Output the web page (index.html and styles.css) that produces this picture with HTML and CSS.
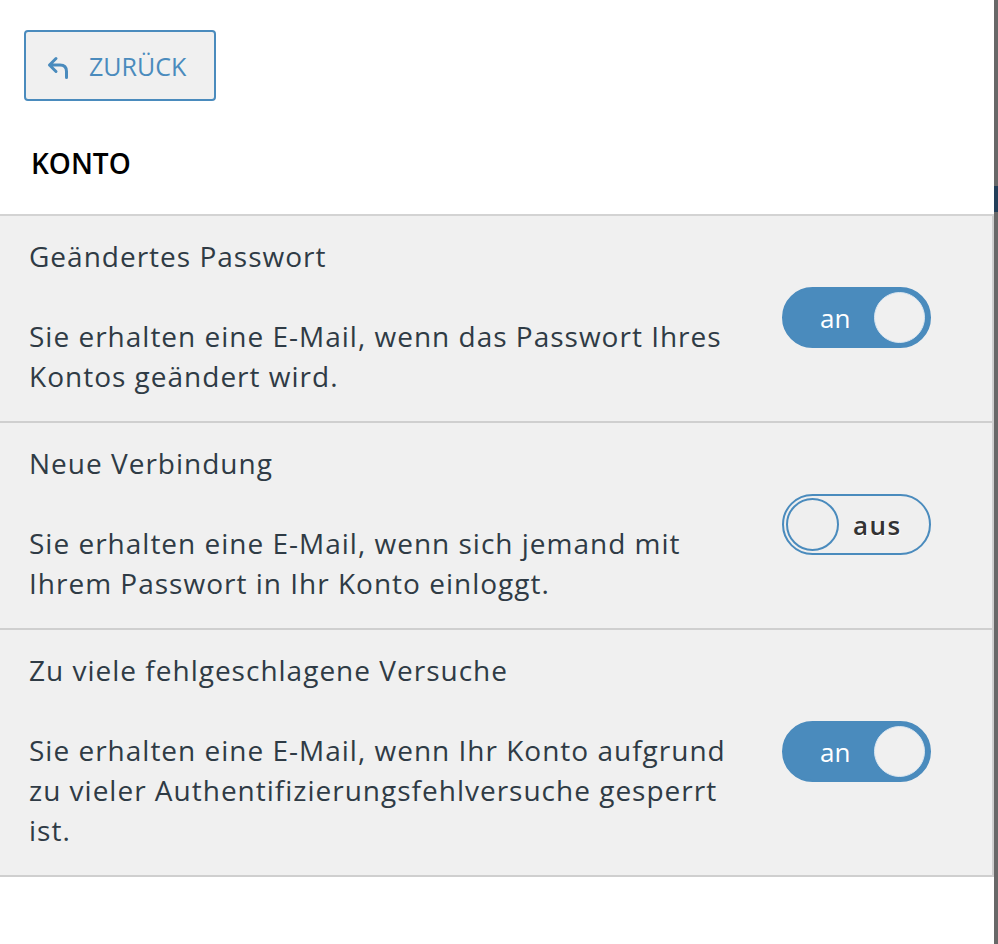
FILE: index.html
```html
<!DOCTYPE html>
<html lang="de">
<head>
<meta charset="utf-8">
<title>Konto</title>
<link rel="stylesheet" href="styles.css">
</head>
<body>
<div class="layout">
  <main class="panel">
    <div class="top">
      <button class="back" type="button">
        <svg class="back-icon" width="22" height="24" viewBox="0 0 22 24" aria-hidden="true">
          <path d="M9 2.5 L2.5 9 L9 15.5 M2.5 9 H13 Q19.5 9 19.5 15.5 V21.5" fill="none" stroke="#4a8bbd" stroke-width="3" stroke-linecap="round" stroke-linejoin="round"/>
        </svg>
        <span>ZURÜCK</span>
      </button>
      <h2 class="section">KONTO</h2>
    </div>
    <ul class="list">
      <li class="row">
        <div class="text">
          <div class="title">Geändertes Passwort</div>
          <p class="desc">Sie erhalten eine E-Mail, wenn das Passwort Ihres Kontos geändert wird.</p>
        </div>
        <div class="toggle on"><span class="label">an</span><span class="knob"></span></div>
      </li>
      <li class="row">
        <div class="text">
          <div class="title">Neue Verbindung</div>
          <p class="desc">Sie erhalten eine E-Mail, wenn sich jemand mit Ihrem Passwort in Ihr Konto einloggt.</p>
        </div>
        <div class="toggle off"><span class="knob"></span><span class="label">aus</span></div>
      </li>
      <li class="row">
        <div class="text">
          <div class="title">Zu viele fehlgeschlagene Versuche</div>
          <p class="desc">Sie erhalten eine E-Mail, wenn Ihr Konto aufgrund zu vieler Authentifizierungsfehlversuche gesperrt ist.</p>
        </div>
        <div class="toggle on"><span class="label">an</span><span class="knob"></span></div>
      </li>
    </ul>
  </main>
  <div class="backdrop"><div class="backdrop-bar"></div></div>
</div>
</body>
</html>
```
FILE: styles.css
```css
* { box-sizing: border-box; }
html, body { margin: 0; padding: 0; background: #ffffff; }
body {
  font-family: "Open Sans", "Liberation Sans", sans-serif;
  color: #2f3b45;
}
.layout {
  display: flex;
  min-height: 944px;
}
.panel {
  width: 994px;
  background: #ffffff;
}
.backdrop {
  flex: 1;
  background: #686868;
  padding-top: 186px;
}
.backdrop-bar {
  height: 26px;
  background: #233f5a;
}
.top {
  padding: 30px 24px 0 24px;
}
.back {
  display: flex;
  align-items: center;
  gap: 20px;
  width: 192px;
  height: 71px;
  padding: 0 0 0 21px;
  background: #f0f0f0;
  border: 2px solid #4a8bbd;
  border-radius: 4px;
  color: #4a8bbd;
  font-family: inherit;
  font-size: 25px;
  font-weight: 500;
  cursor: pointer;
}
.back-icon { display: block; margin-top: 4px; }
.section {
  margin: 0;
  padding: 45px 0 0 7px;
  height: 113px;
  font-size: 28px;
  font-weight: 600;
  color: #000000;
  line-height: 34px;
}
.list {
  list-style: none;
  margin: 0;
  padding: 0;
  width: 994px;
  border-top: 2px solid #d3d3d3;
}
.row {
  display: flex;
  align-items: center;
  background: #f0f0f0;
  border-right: 2px solid #cfcfcf;
  border-bottom: 2px solid #cfcfcf;
  padding: 20px 0 25px 29px;
}
.text {
  width: 735px;
}
.title {
  font-size: 28px;
  line-height: 40px;
  letter-spacing: 1px;
}
.desc {
  margin: 40px 0 0 0;
  font-size: 28px;
  line-height: 40px;
  letter-spacing: 1px;
}
.toggle {
  margin: 3px 0 0 18px;
  width: 149px;
  height: 61px;
  border-radius: 31px;
  display: flex;
  align-items: center;
  border: 2px solid #4a8bbd;
  flex-shrink: 0;
}
.toggle.on {
  background: #4a8bbd;
  justify-content: space-between;
  padding: 0 4px 0 36px;
}
.toggle.on .label {
  color: #ffffff;
  font-size: 26px;
}
.toggle.on .knob {
  width: 51px;
  height: 51px;
  border-radius: 50%;
  background: #f0f0f0;
  border: 1px solid #d9e6f1;
}
.toggle.off {
  background: #efefef;
  padding: 0 0 0 2px;
  gap: 14px;
}
.toggle.off .knob {
  width: 53px;
  height: 53px;
  border-radius: 50%;
  border: 2px solid #4a8bbd;
  background: #efefef;
}
.toggle.off .label {
  color: #333333;
  font-size: 26px;
  font-weight: 600;
  letter-spacing: 1.5px;
  text-shadow: 1px 1px 0 #ffffff;
}
```
